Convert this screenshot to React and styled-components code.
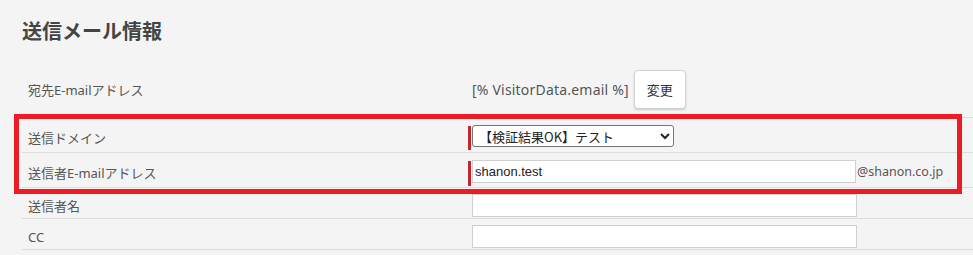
import styled, { createGlobalStyle } from "styled-components";

const GlobalStyle = createGlobalStyle`
  html, body {
    margin: 0;
    padding: 0;
    background: #f4f4f4;
    overflow: hidden;
  }
  body {
    font-family: "Noto Sans", "Noto Sans CJK JP", sans-serif;
    color: #555;
  }
`

const Page = styled.div`
  width: 100vw;
  box-sizing: border-box;
  padding-left: 22px;
`

const Title = styled.h2`
  margin: 0 0 20px;
  padding-top: 16px;
  font-size: 20px;
  line-height: 30px;
  font-weight: 700;
  color: #444;
  font-family: "Noto Sans CJK JP", sans-serif;
`

const Table = styled.div`
  display: flex;
  flex-direction: column;
`

const Group = styled.div`
  position: relative;
`

const Highlight = styled.div`
  position: absolute;
  top: -4px;
  bottom: -6px;
  left: -8px;
  right: 11px;
  border: 5px solid #ed1c24;
  pointer-events: none;
`

const Row = styled.div`
  display: grid;
  grid-template-columns: 446px 1fr;
  align-items: center;
  padding: ${(p) => p.$pad || "6px 0 1px"};
  border-bottom: 1px solid #dcdcdc;
`

const Label = styled.div`
  padding-left: 6px;
  font-size: 13px;
  line-height: 18px;
  color: #555;
`

const Value = styled.div`
  display: flex;
  align-items: flex-start;
  font-size: 13px;
  color: #555;
`

const Centered = styled(Value)`
  align-items: center;
`

const RequiredBar = styled.span`
  width: 3px;
  height: ${(p) => p.$h || 24}px;
  margin-top: 1px;
  margin-right: 1px;
  background: #c1272d;
  flex-shrink: 0;
`

const Plain = styled.span`
  margin-left: 4px;
  font-size: 14px;
  letter-spacing: 0.2px;
  line-height: 18px;
`

const Button = styled.button`
  margin-left: 5px;
  width: 52px;
  height: 39px;
  background: #fff;
  border: 1px solid #d2d2d2;
  border-radius: 4px;
  box-shadow: 0 1px 2px rgba(0, 0, 0, 0.18);
  font-family: "Noto Sans CJK JP", sans-serif;
  font-size: 13px;
  color: #333;
  padding: 0;
`

const Select = styled.select`
  box-sizing: border-box;
  width: 202px;
  height: 22px;
  padding: 0 2px;
  background: #fff;
  border: 1px solid #767676;
  border-radius: 3px;
  font-family: "Noto Sans CJK JP", sans-serif;
  font-size: 13px;
  color: #222;
`

const Input = styled.input`
  box-sizing: border-box;
  width: ${(p) => (p.$bar ? 384 : 385)}px;
  height: 23px;
  padding: 0 2px;
  margin-left: ${(p) => (p.$bar ? 0 : 4)}px;
  background: #fff;
  border: 1px solid #cfcfcf;
  font-family: "Liberation Sans", "Noto Sans CJK JP", sans-serif;
  font-size: 13px;
  color: #222;
  outline: none;
`

const Suffix = styled.span`
  margin-left: 1px;
  line-height: 23px;
  font-size: 12.5px;
  color: #555;
`

export default function App() {
  return (
    <>
      <GlobalStyle />
      <Page>
        <Title>送信メール情報</Title>
        <Table>
          <Row $pad="4px 0 8px">
            <Label>宛先E-mailアドレス</Label>
            <Centered>
              <Plain>[% VisitorData.email %]</Plain>
              <Button>変更</Button>
            </Centered>
          </Row>
          <Group>
            <Row $pad="7px 0 2px">
              <Label>送信ドメイン</Label>
              <Value>
                <RequiredBar $h={24} />
                <Select defaultValue="ok">
                  <option value="ok">【検証結果OK】テスト</option>
                </Select>
              </Value>
            </Row>
            <Row $pad="7px 0 1px">
              <Label>送信者E-mailアドレス</Label>
              <Value>
                <RequiredBar $h={25} />
                <Input $bar defaultValue="shanon.test" />
                <Suffix>@shanon.co.jp</Suffix>
              </Value>
            </Row>
            <Highlight />
          </Group>
          <Row>
            <Label>送信者名</Label>
            <Value>
              <Input />
            </Value>
          </Row>
          <Row>
            <Label>CC</Label>
            <Value>
              <Input />
            </Value>
          </Row>
        </Table>
      </Page>
    </>
  )
}
